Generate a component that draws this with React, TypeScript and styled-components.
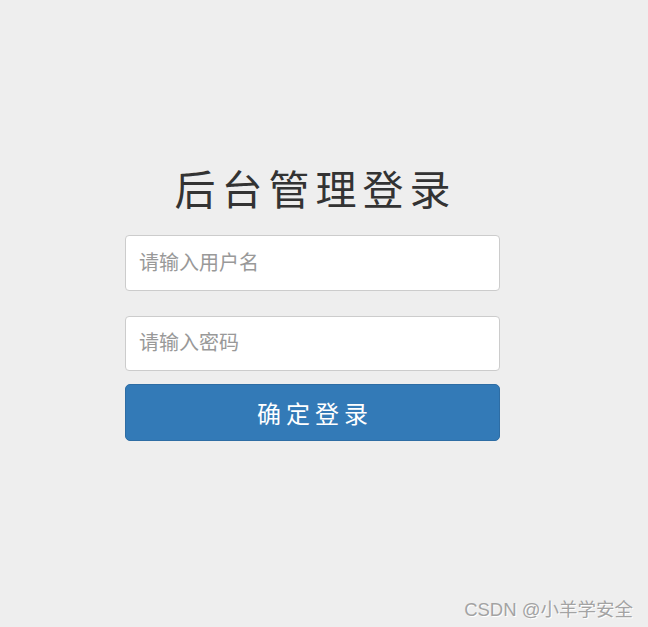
import styled, { createGlobalStyle } from 'styled-components'

const GlobalStyle = createGlobalStyle`
  html, body {
    margin: 0;
    padding: 0;
    background: #eeeeee;
  }
  body {
    font-family: 'Liberation Sans', 'Noto Sans CJK SC', sans-serif;
  }
`

const Page = styled.div`
  position: relative;
  width: 648px;
  height: 627px;
  overflow: hidden;
  background: #eeeeee;
`

const LoginBox = styled.form`
  display: flex;
  flex-direction: column;
  width: 375px;
  margin-left: 125px;
  padding-top: 166px;
`

const Title = styled.h1`
  margin: 0 0 27px;
  padding-left: 6px;
  font-family: 'Noto Sans CJK SC', sans-serif;
  font-weight: 400;
  font-size: 41px;
  line-height: 42px;
  letter-spacing: 6px;
  color: #333333;
  text-align: center;
`

const Field = styled.input<{ $gap: number; $height: number }>`
  box-sizing: border-box;
  width: 100%;
  height: ${(p) => p.$height}px;
  margin-bottom: ${(p) => p.$gap}px;
  padding: 0 13px;
  border: 1px solid #cccccc;
  border-radius: 4px;
  background: #ffffff;
  font-family: 'Liberation Sans', 'Noto Sans CJK SC', sans-serif;
  font-size: 20px;
  color: #555555;
  outline: none;

  &::placeholder {
    color: #999999;
  }
`

const SubmitButton = styled.button`
  box-sizing: border-box;
  width: 100%;
  height: 57px;
  padding: 0 0 0 5px;
  border: 1px solid #2e6da4;
  border-radius: 5px;
  background: #337ab7;
  color: #ffffff;
  font-family: 'Noto Sans CJK SC', sans-serif;
  font-size: 24px;
  letter-spacing: 5px;
  cursor: pointer;
`

const Watermark = styled.div`
  position: absolute;
  right: 15px;
  bottom: 6px;
  font-family: 'Liberation Sans', 'Noto Sans CJK SC', sans-serif;
  font-size: 18.5px;
  color: #a3a3a3;
  text-shadow: 1px 1px 0 #ffffff;
`

export default function App() {
  return (
    <Page>
      <GlobalStyle />
      <LoginBox onSubmit={(e) => e.preventDefault()}>
        <Title>后台管理登录</Title>
        <Field $gap={25} $height={56} type='text' placeholder='请输入用户名' />
        <Field $gap={13} $height={55} type='password' placeholder='请输入密码' />
        <SubmitButton type='submit'>确定登录</SubmitButton>
      </LoginBox>
      <Watermark>CSDN @小羊学安全</Watermark>
    </Page>
  )
}
